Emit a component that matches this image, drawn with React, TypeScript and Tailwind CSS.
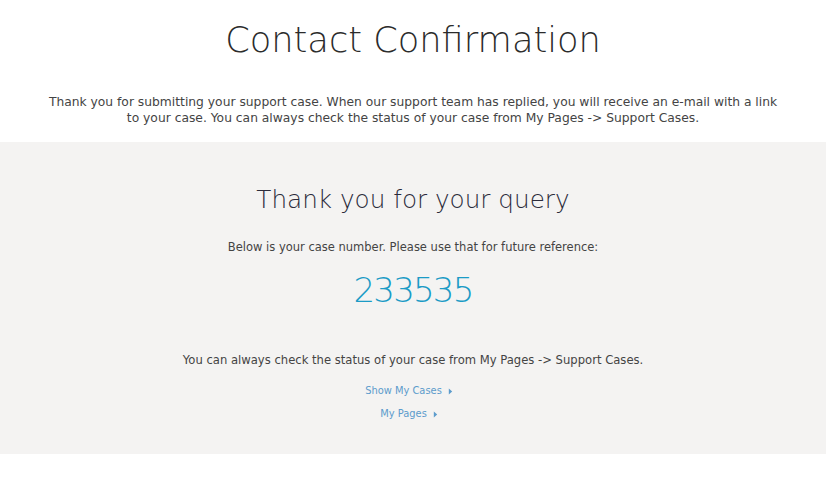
import React from 'react'

const font = { fontFamily: '"DejaVu Sans", "Open Sans", sans-serif' }

const Caret = () => (
    <svg viewBox="0 0 6 8" className="ml-[6px] inline-block h-[7px] w-[5px] fill-current">
        <path d="M1 0.5 L5 4 L1 7.5 Z" />
    </svg>
)

export default function App() {
    return (
        <div className="min-h-[492px] bg-white text-[#333]" style={font}>
            {/* Header */}
            <div className="flex flex-col items-center px-12 pt-[16px]">
                <h1 className="text-[35.2px] font-extralight leading-[48px] text-[#2b2b2b]">
                    Contact Confirmation
                </h1>
                <p className="mt-[30px] max-w-[740px] text-center text-[12.3px] leading-[16px] text-[#444]">
                    Thank you for submitting your support case. When our support team has replied, you will receive an e-mail with a link to your case. You can always check the status of your case from My Pages -&gt; Support Cases.
                </p>
            </div>

            {/* Confirmation panel */}
            <div className="mt-[16px] flex h-[312px] flex-col items-center bg-[#f4f3f2] pt-[41px]">
                <h2 className="text-[24.7px] font-extralight leading-[34px] text-[#2b2b3b]">
                    Thank you for your query
                </h2>
                <p className="mt-[22px] text-[11.5px] leading-[16px] text-[#444]">
                    Below is your case number. Please use that for future reference:
                </p>
                <div className="mt-[15px] text-[34px] font-extralight leading-[40px] tracking-[-1.8px] text-[#1b9bc6]">
                    233535
                </div>
                <p className="mt-[42px] text-[11.6px] leading-[16px] text-[#444]">
                    You can always check the status of your case from My Pages -&gt; Support Cases.
                </p>
                <a href="#" className="mr-[8px] mt-[16px] flex items-center text-[9.9px] leading-[14px] text-[#5c9bcc]">
                    Show My Cases
                    <Caret />
                </a>
                <a href="#" className="mr-[8px] mt-[9px] flex items-center text-[9.9px] leading-[14px] text-[#5c9bcc]">
                    My Pages
                    <Caret />
                </a>
            </div>
        </div>
    )
}
